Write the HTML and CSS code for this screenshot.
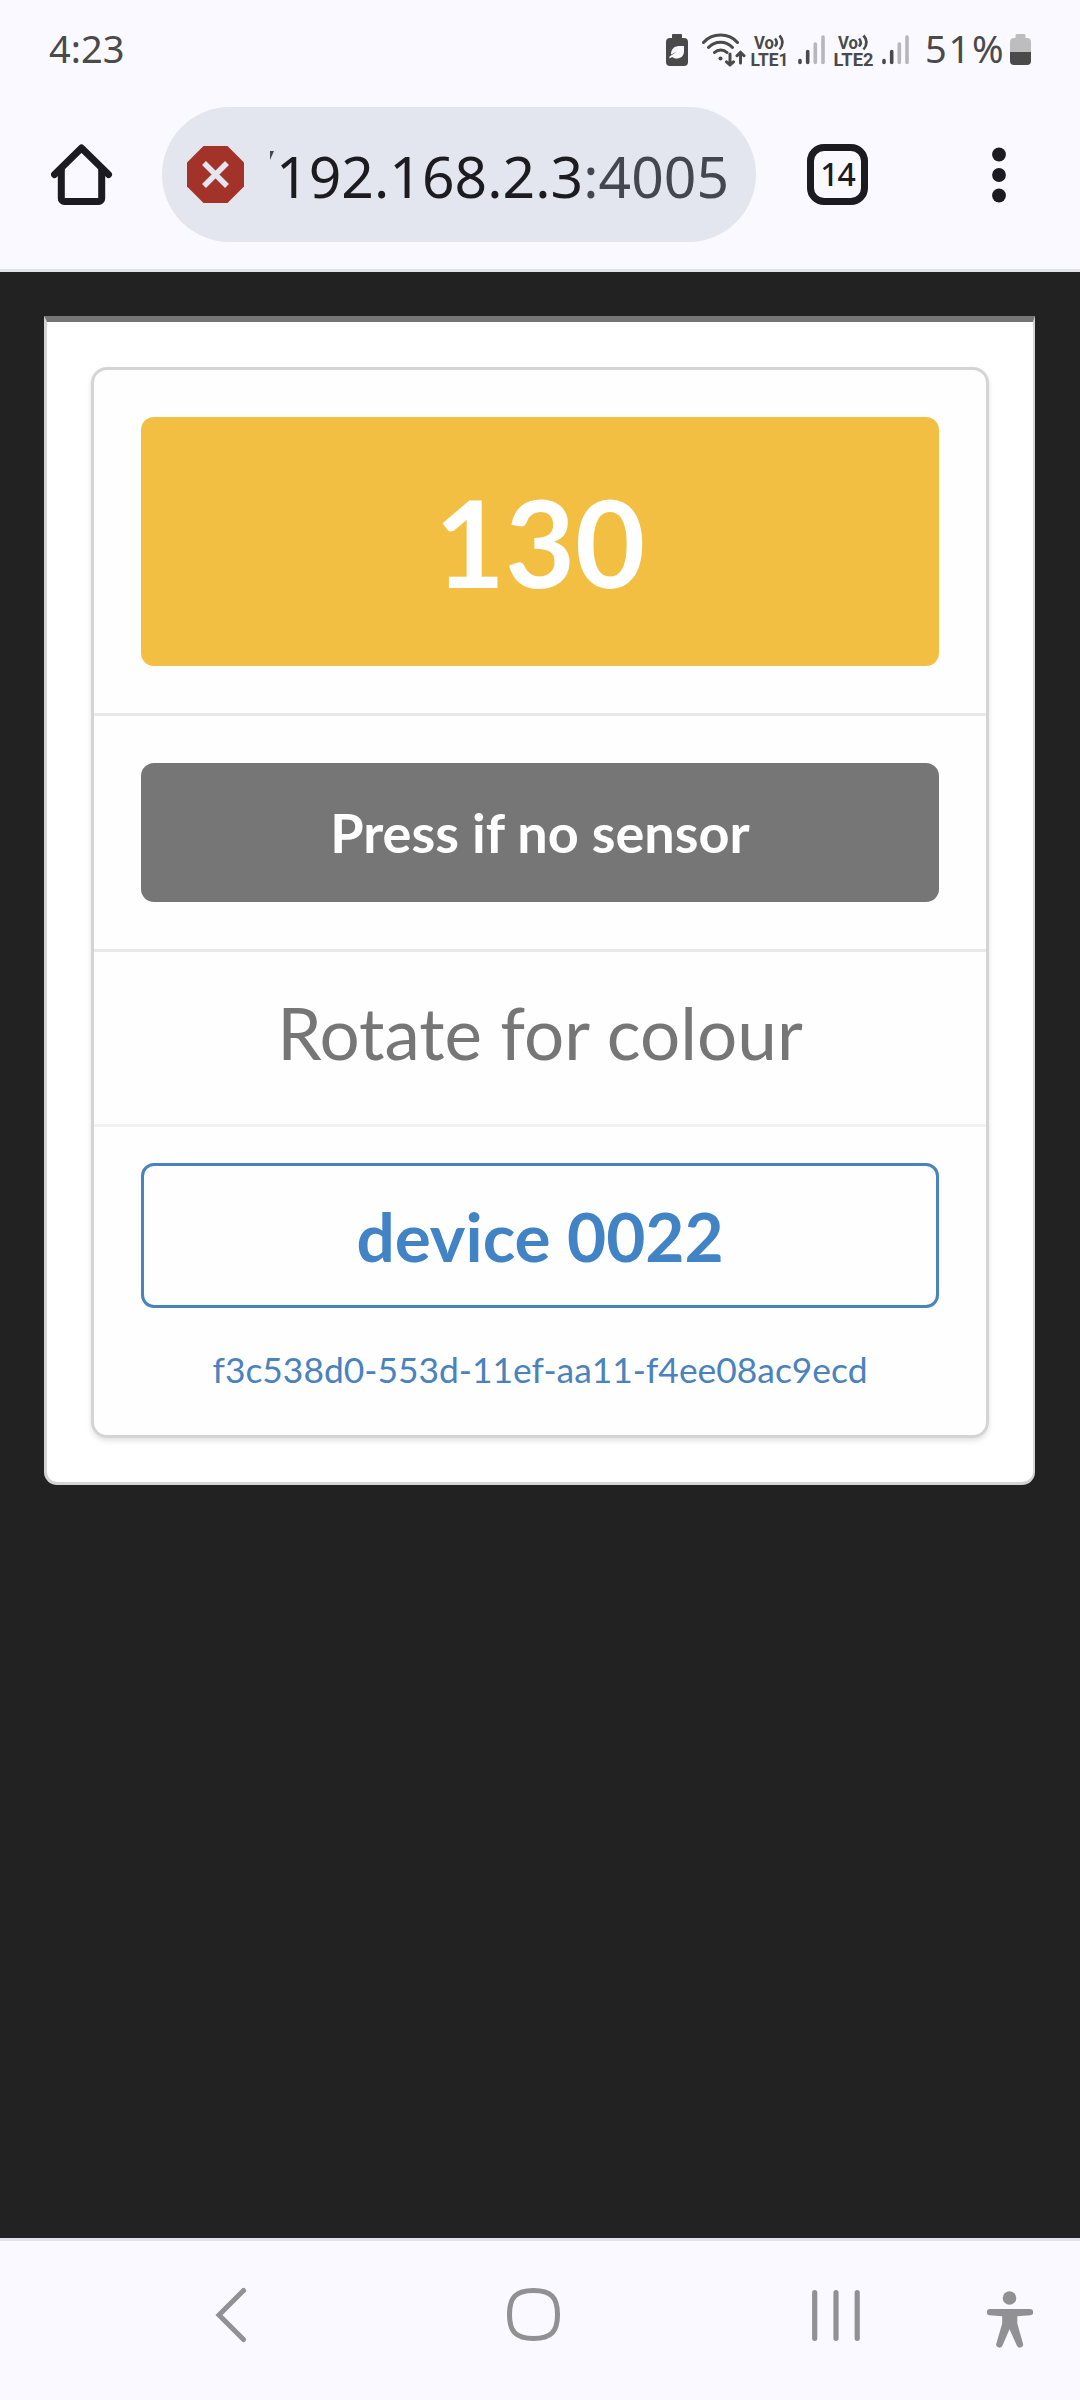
FILE: index.html
```html
<!DOCTYPE html>
<html lang="en">
<head>
<meta charset="utf-8">
<title>device 0022</title>
<link rel="stylesheet" href="styles.css">
</head>
<body>
<header class="chrome">
  <div class="status">
    <span class="clock">4:23</span>
    <div class="indicators">
      <svg class="saver" width="22" height="32" viewBox="0 0 22 32">
        <path fill="#4a4a4a" d="M7 0h8a1 1 0 0 1 1 1v3h2a4 4 0 0 1 4 4v20a4 4 0 0 1-4 4H4a4 4 0 0 1-4-4V8a4 4 0 0 1 4-4h2V1a1 1 0 0 1 1-1z"/>
        <path fill="#faf9ff" d="M18 12v5c0 5-3 7.500-8 7.500-1.500 0-3-.6-3.800-1.500L3.500 24.500v-2l7.500-5-6 3c0-5 3-8.500 8-8.500z"/>
      </svg>
      <svg class="wifi" width="44" height="34" viewBox="0 0 44 34" fill="none" stroke="#4a4a4a" stroke-width="3" stroke-linecap="round">
        <path d="M1.500 9.500C10 -.5 27 -.5 35.500 9.500M6.500 14.500c6.500-7 17.500-7 24 0M12.500 19.500c3.500-3.500 9-3.500 12.500 0"/>
        <circle cx="18.500" cy="25.500" r="2" fill="#4a4a4a" stroke="none"/>
        <path d="M28 21v11M24.500 28.800 28 32l3.500-3.200M38.500 30V20M35 22.700l3.500-3.500 3.500 3.500" stroke-linejoin="round"/>
      </svg>
      <svg class="volte" width="40" height="34" viewBox="0 0 40 34">
        <text class="volte-text" x="3" y="15.500" font-size="17.500" textLength="20" lengthAdjust="spacingAndGlyphs">Vo</text>
        <path d="M24 5.500q3.500 4 0 8M28.500 2.500q6 6.500 0 14" fill="none" stroke="#4a4a4a" stroke-width="2.600"/>
        <text class="volte-text" x="-.5" y="33" font-size="18" textLength="38" lengthAdjust="spacingAndGlyphs">LTE1</text>
      </svg>
      <svg class="signal" width="27" height="30" viewBox="0 0 27 30" stroke-width="3.600" stroke-linecap="round">
        <path stroke="#4a4a4a" d="M2 25.500v2M9.700 16.500v11"/><path stroke="#b7b7ba" d="M17.300 9v18.500M25 2v25.500"/>
      </svg>
      <svg class="volte second" width="40" height="34" viewBox="0 0 40 34">
        <text class="volte-text" x="4" y="15.500" font-size="17.500" textLength="20" lengthAdjust="spacingAndGlyphs">Vo</text>
        <path d="M25 5.500q3.500 4 0 8M29.500 2.500q6 6.500 0 14" fill="none" stroke="#4a4a4a" stroke-width="2.600"/>
        <text class="volte-text" x="-.5" y="33" font-size="18" textLength="40" lengthAdjust="spacingAndGlyphs">LTE2</text>
      </svg>
      <svg class="signal" width="27" height="30" viewBox="0 0 27 30" stroke-width="3.600" stroke-linecap="round">
        <path stroke="#4a4a4a" d="M2 25.500v2M9.700 16.500v11"/><path stroke="#b7b7ba" d="M17.300 9v18.500M25 2v25.500"/>
      </svg>
      <span class="percent">51%</span>
      <svg class="battery" width="21" height="31" viewBox="0 0 21 31">
        <path fill="#bdbdbf" d="M7 0h7a1.500 1.500 0 0 1 1.500 1.500V4H17a4 4 0 0 1 4 4v10H0V8a4 4 0 0 1 4-4h1.500V1.500A1.500 1.500 0 0 1 7 0z"/>
        <path fill="#4a4a4a" d="M0 18h21v9a4 4 0 0 1-4 4H4a4 4 0 0 1-4-4z"/>
      </svg>
    </div>
  </div>
  <div class="toolbar">
    <svg class="home" width="62" height="61" viewBox="0 0 62 61" fill="none" stroke="#1b1b20" stroke-width="7">
      <path d="M3.500 30.500 30.500 4l27 26.500" stroke-linecap="round" stroke-linejoin="round"/>
      <path d="M10.300 24v30.500a3 3 0 0 0 3 3h34.400a3 3 0 0 0 3-3V24"/>
    </svg>
    <div class="address">
      <svg class="unsafe" width="57" height="57" viewBox="0 0 57 57">
        <path fill="#a33228" d="M16.500 0h24L57 16.500v24L40.500 57h-24L0 40.500v-24z"/>
        <path d="m17 17 23 23M40 17 17 40" stroke="#e3e6ef" stroke-width="5.500"/>
      </svg>
      <svg class="cut" width="4" height="9" viewBox="0 0 4 9"><path fill="#44474f" d="M0 0h4L0 9z"/></svg>
      <span class="url">192.168.2.3<span class="port">:4005</span></span>
    </div>
    <div class="tabs">14</div>
    <svg class="more" width="14" height="56" viewBox="0 0 14 56" fill="#1b1b20"><circle cx="7" cy="7.500" r="6.900"/><circle cx="7" cy="28" r="6.900"/><circle cx="7" cy="48.500" r="6.900"/></svg>
  </div>
</header>
<main class="page">
  <section class="segment">
    <div class="card">
      <div class="row"><div class="button reading">130</div></div>
      <div class="row"><div class="button press">Press if no sensor</div></div>
      <div class="row hint">Rotate for colour</div>
      <div class="row device">
        <div class="button name">device 0022</div>
        <div class="uuid">f3c538d0-553d-11ef-aa11-f4ee08ac9ecd</div>
      </div>
    </div>
  </section>
</main>
<nav class="nav">
  <svg class="nav-back" width="32" height="56" viewBox="0 0 32 56" fill="none" stroke="#919193" stroke-width="5" stroke-linecap="round"><path d="M28.500 3.500 4 28l24.500 24.500"/></svg>
  <svg class="nav-home" width="53" height="53" viewBox="0 0 53 53" fill="none" stroke="#919193" stroke-width="5"><path d="M26.500 2.500C44 2.500 50.500 9 50.500 26.500S44 50.500 26.500 50.500 2.500 44 2.500 26.500 9 2.500 26.500 2.500z"/></svg>
  <svg class="nav-recent" width="48" height="51" viewBox="0 0 48 51" stroke="#919193" stroke-width="5.200" stroke-linecap="round"><path d="M2.700 2.700v45.600M24 2.700v45.600M45.200 2.700v45.600"/></svg>
  <svg class="nav-person" width="46" height="57" viewBox="0 0 46 57" fill="#919193">
    <circle cx="22.500" cy="7" r="6.800"/>
    <path d="M3 18h40a3 3 0 0 1 .3 6.200L30.300 25.200v7.300l5.500 19.500a3.200 3.200 0 0 1-6 2.600L22.500 38.200 15.500 54.600a3.200 3.200 0 0 1-6-2.600l5.700-19.500v-7.300L2.700 24.200A3 3 0 0 1 3 18z"/>
  </svg>
</nav>
</body>
</html>
```
FILE: styles.css
```css
* { box-sizing: border-box; }

body {
  margin: 0;
  width: 1080px;
  height: 2400px;
  display: flex;
  flex-direction: column;
  background: #222;
  font-family: Lato, sans-serif;
}

svg { display: block; flex: none; }

/* Browser chrome */
.chrome {
  height: 272px;
  background: #faf9ff;
  border-bottom: 3px solid #e2e2ea;
  font-family: "Noto Sans", sans-serif;
}

.status {
  height: 80px;
  display: flex;
  justify-content: space-between;
  padding: 0 49px;
  color: #4a4a4a;
}

.clock, .percent {
  font-size: 38px;
  line-height: 56px;
  white-space: nowrap;
}
.clock { padding-top: 20px; }

.indicators { display: flex; padding-top: 34px; }
.wifi { margin-left: 14px; margin-top: -1px; }
.volte { margin-left: 5px; margin-top: -1px; overflow: visible; }
.volte-text { font-family: Roboto, sans-serif; font-weight: 700; fill: #4a4a4a; }
.signal { margin-left: 7px; margin-top: 1px; }
.volte.second { margin-left: 9px; }
.volte.second + .signal { margin-left: 8px; }
.percent { width: 80px; margin: -14px 0 0 16px; letter-spacing: 1.8px; }
.battery { margin-left: 5px; }

.toolbar {
  display: flex;
  align-items: center;
  height: 189px;
  padding-left: 51px;
}

.address {
  display: flex;
  align-items: center;
  width: 594px;
  height: 135px;
  margin-left: 49px;
  padding-left: 25px;
  border-radius: 68px;
  background: #e3e6ef;
}
.cut { margin: -38px 0 0 26px; }
.url {
  margin: 3px 0 0 2px;
  font-size: 57px;
  line-height: 80px;
  letter-spacing: .05px;
  color: #1b1b20;
  white-space: nowrap;
}
.port { color: #44474f; }

.tabs {
  width: 61px;
  height: 61px;
  margin-left: 51px;
  border: 7px solid #1b1b20;
  border-radius: 17px;
  font-size: 32px;
  font-weight: 500;
  line-height: 45px;
  letter-spacing: -1px;
  text-align: center;
  color: #1b1b20;
}
.more { margin-left: 124px; }

/* Page */
.page { flex: 1; padding: 44px 44px 0; }

.segment {
  width: 991px;
  height: 1169px;
  padding: 45px 44px 0;
  background: #fff;
  border: 3px solid #d4d4d5;
  border-top: 6px solid #767676;
  border-right-width: 2px;
  border-radius: 0 0 13px 13px;
}

.card {
  width: 898px;
  height: 1071px;
  border: 3px solid #d4d4d5;
  border-radius: 16px;
  background: #fefefe;
  box-shadow: 0 3px 5px rgba(34, 36, 38, .13);
}

.row { padding: 47px 47px 0; border-top: 3px solid #e8e8e9; text-align: center; }
.row:first-child { height: 343px; border-top: 0; }
.row:nth-child(2) { height: 236px; }

.button { border-radius: 13px; font-weight: 700; white-space: nowrap; }
.reading { height: 249px; background: #f2bf42; color: #fff; font-size: 121px; line-height: 249px; }
.press { height: 139px; background: #767676; color: #fff; font-size: 54px; line-height: 139px; }
.row.hint { height: 175px; padding-top: 37px; color: #767676; font-size: 71px; line-height: 88px; }
.row.device { padding-top: 36px; border-top-color: #f1f1f2; }
.name {
  height: 145px;
  border: 3px solid #4a82bd;
  color: #4183c4;
  font-size: 67.5px;
  line-height: 139px;
}
.uuid { padding-top: 38px; color: #4a82bd; font-size: 35.4px; line-height: 48px; white-space: nowrap; }

/* System navigation */
.nav {
  display: flex;
  height: 162px;
  padding: 46px 0 0 215px;
  border-top: 3px solid #e2e2ea;
  background: #faf9ff;
}
.nav-home { margin: 1px 0 0 260px; }
.nav-recent { margin: 3px 0 0 252px; }
.nav-person { margin: 4px 0 0 127px; }
```
